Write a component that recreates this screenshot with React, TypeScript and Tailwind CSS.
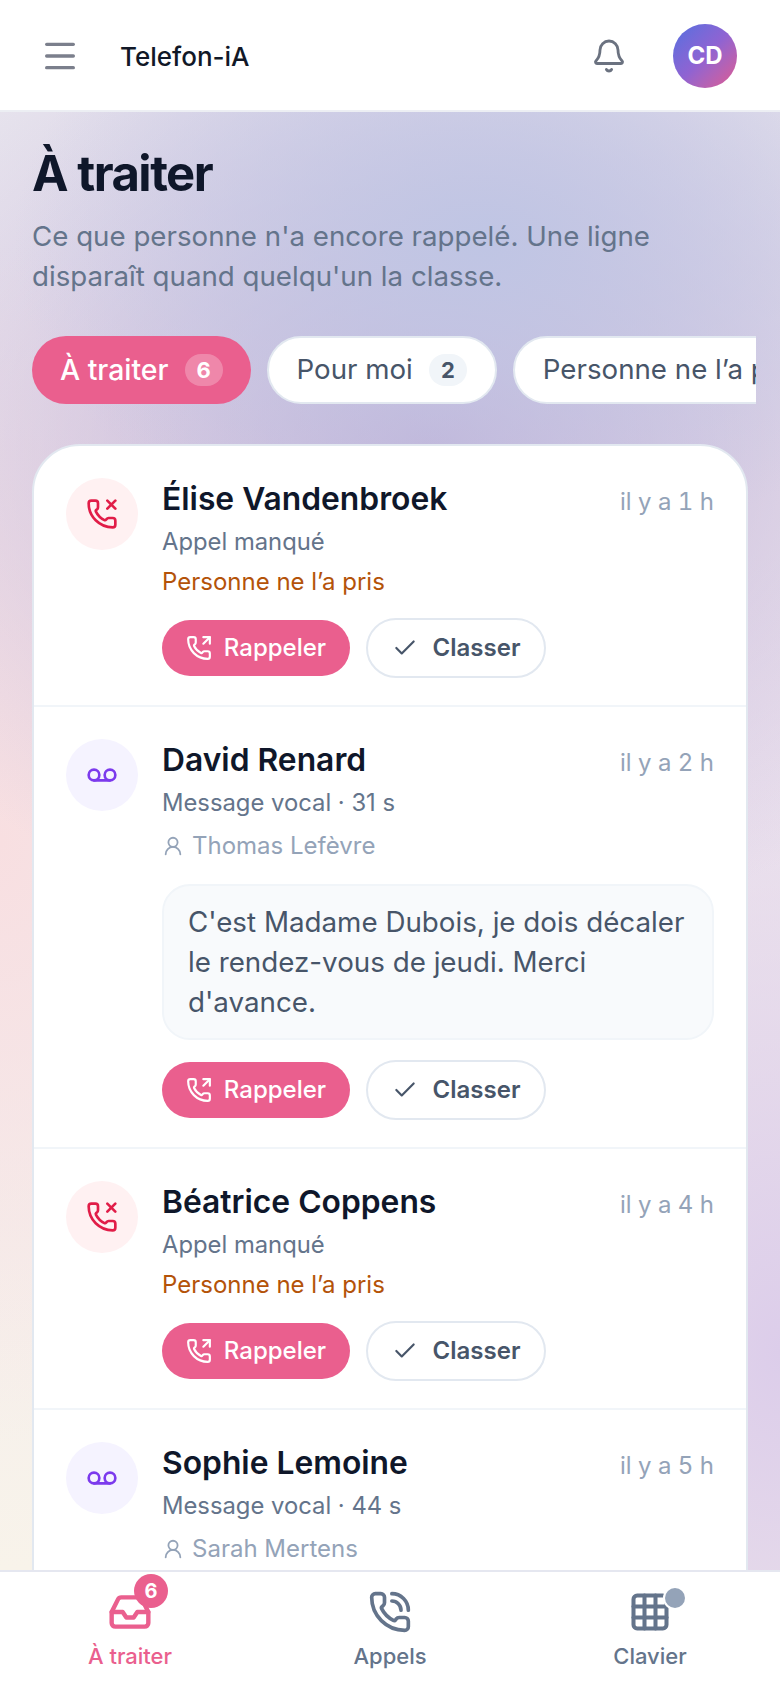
import React from "react";
import { Menu, Bell, PhoneMissed, Voicemail, UserRound, PhoneOutgoing, Check, Inbox, PhoneCall, Grid3x3 } from "lucide-react";

type Item = { name: string; time: string; kind: "missed" | "voicemail"; sub: string; agent?: string; note?: string };

const items: Item[] = [
  { name: "Élise Vandenbroek", time: "il y a 1 h", kind: "missed", sub: "Appel manqué" },
  { name: "David Renard", time: "il y a 2 h", kind: "voicemail", sub: "Message vocal · 31 s", agent: "Thomas Lefèvre", note: "C'est Madame Dubois, je dois décaler le rendez-vous de jeudi. Merci d'avance." },
  { name: "Béatrice Coppens", time: "il y a 4 h", kind: "missed", sub: "Appel manqué" },
  { name: "Sophie Lemoine", time: "il y a 5 h", kind: "voicemail", sub: "Message vocal · 44 s", agent: "Sarah Mertens" },
];

function Row({ item, last }: { item: Item; last: boolean }) {
  const missed = item.kind === "missed";
  return (
    <div className={`flex gap-[24px] px-[32px] pt-[32px] pb-[27px] ${last ? "" : "border-b-2 border-[#f1f5f9]"}`}>
      <div className={`flex h-[72px] w-[72px] shrink-0 items-center justify-center rounded-full ${missed ? "bg-[#fff1f2] text-[#e11d48]" : "bg-[#f5f3ff] text-[#7c3aed]"}`}>
        {missed ? <PhoneMissed size={32} strokeWidth={2} /> : <Voicemail size={32} strokeWidth={2} />}
      </div>
      <div className="min-w-0 flex-1">
        <div className="flex items-start justify-between">
          <div className="text-[31.8px] leading-[42px] font-semibold text-[#0f172a]">{item.name}</div>
          <div className="pt-[6px] text-[24px] leading-[36px] text-[#94a3b8] tabular-nums">{item.time}</div>
        </div>
        <div className="mt-[4px] text-[23.8px] leading-[36px] text-[#64748b]">{item.sub}</div>
        {item.agent ? (
          <div className="mt-[7px] flex items-center gap-[8px] text-[24px] leading-[36px] text-[#94a3b8]">
            <UserRound size={22} strokeWidth={2} />
            <span>{item.agent}</span>
          </div>
        ) : (
          <div className="mt-[4px] text-[24px] leading-[36px] text-[#b45309]">Personne ne l’a pris</div>
        )}
        {item.note && (
          <div className="mt-[20px] rounded-[28px] border-2 border-[#f1f5f9] bg-[#f8fafc] px-[24px] py-[16px] text-[27.75px] leading-[40px] text-[#475569]">
            {item.note}
          </div>
        )}
        <div className={`${item.note ? "mt-[20px]" : "mt-[18px]"} flex items-center gap-[16px]`}>
          <button className="flex h-[56px] w-[188px] items-center justify-center gap-[12px] rounded-full bg-[#ea5f8e] text-[24px] font-medium text-white">
            <PhoneOutgoing size={26} strokeWidth={2} />
            Rappeler
          </button>
          <button className="flex h-[60px] w-[180px] items-center justify-center gap-[15px] rounded-full border-2 border-[#e2e8f0] bg-white text-[24px] font-semibold text-[#475569]">
            <Check size={26} strokeWidth={2} />
            Classer
          </button>
        </div>
      </div>
    </div>
  );
}

function Tab({ label, count, active }: { label: string; count?: string; active?: boolean }) {
  return (
    <div className={`flex h-[68px] shrink-0 items-center gap-[16px] rounded-full px-[28px] ${active ? "bg-[#ea5f8e] text-[28.4px] font-medium text-white" : "border-2 border-[#e2e8f0] bg-white text-[27.7px] text-[#475569]"}`}>
      <span className="whitespace-nowrap">{label}</span>
      {count && (
        <span className={`flex h-[32px] min-w-[38px] items-center justify-center rounded-full text-[22px] font-bold ${active ? "bg-white/25 text-white" : "bg-[#f1f5f9] text-[#475569]"}`}>{count}</span>
      )}
    </div>
  );
}

export default function App() {
  return (
    <div className="flex h-[1688px] w-[780px] flex-col overflow-hidden bg-white font-['Inter',sans-serif]">
      <header className="flex h-[112px] shrink-0 items-center border-b-2 border-[#eceef3] bg-white pt-[2px] pr-[43px] pl-[40px]">
        <Menu size={40} strokeWidth={2} className="text-[#7b7f8c]" />
        <div className="ml-[40px] flex-1 text-[26px] font-medium text-[#111827]">Telefon-iA</div>
        <Bell size={36} strokeWidth={1.9} className="mr-[46px] text-[#6b7280]" />
        <div className="flex h-[64px] w-[64px] items-center justify-center rounded-full bg-gradient-to-br from-[#4f6fe0] via-[#8f63d2] to-[#e0568f] text-[24px] font-bold text-white">CD</div>
      </header>

      <main className="min-h-0 flex-1 overflow-hidden bg-[radial-gradient(ellipse_470px_320px_at_62%_9%,#bfc5e4_0%,transparent_100%),radial-gradient(ellipse_640px_500px_at_55%_23%,#c2b3d8_0%,transparent_100%),radial-gradient(ellipse_380px_600px_at_0%_50%,#f8dfe1_0%,transparent_100%),radial-gradient(ellipse_500px_800px_at_100%_85%,#dccdea_0%,transparent_100%),linear-gradient(180deg,#e8e5ee_0%,#f0e8ef_40%,#f8f3ea_100%)] pt-[30px]">
        <div className="px-[32px]">
          <h1 className="text-[49px] leading-[64px] font-bold tracking-[-1.5px] text-[#0f172a]">À traiter</h1>
          <p className="mt-[10px] text-[27.7px] leading-[40px] text-[#64748b]">
            Ce que personne n'a encore rappelé. Une ligne disparaît quand quelqu'un la classe.
          </p>
        </div>
        <div className="mt-[40px] ml-[32px] mr-[24px] flex gap-[16px] overflow-hidden">
          <Tab label="À traiter" count="6" active />
          <Tab label="Pour moi" count="2" />
          <Tab label="Personne ne l’a pris" count="4" />
        </div>
        <div className="mx-[32px] mt-[40px] overflow-hidden rounded-t-[48px] border-2 border-[#e2e8f0] bg-white">
          {items.map((item, i) => (
            <Row key={item.name} item={item} last={i === items.length - 1} />
          ))}
        </div>
      </main>

      <nav className="grid h-[118px] shrink-0 grid-cols-3 border-t-2 border-[#e5e7f0] bg-white">
        <div className="flex flex-col items-center pt-[18px] text-[#ea5f8e]">
          <div className="relative">
            <Inbox size={44} strokeWidth={2.4} />
            <span className="absolute -top-[16px] -right-[16px] flex h-[34px] w-[34px] items-center justify-center rounded-full bg-[#ea5f8e] text-[20px] font-bold text-white">6</span>
          </div>
          <span className="mt-[6px] text-[22px] font-medium">À traiter</span>
        </div>
        <div className="flex flex-col items-center pt-[18px] text-[#64748b]">
          <PhoneCall size={44} strokeWidth={2} />
          <span className="mt-[6px] text-[22px] font-medium">Appels</span>
        </div>
        <div className="flex flex-col items-center pt-[18px] text-[#64748b]">
          <div className="relative">
            <Grid3x3 size={44} strokeWidth={2.2} />
            <span className="absolute -top-[2px] -right-[13px] h-[20px] w-[20px] rounded-full bg-[#94a3b8] ring-2 ring-white" />
          </div>
          <span className="mt-[6px] text-[22px] font-medium">Clavier</span>
        </div>
      </nav>
    </div>
  );
}
